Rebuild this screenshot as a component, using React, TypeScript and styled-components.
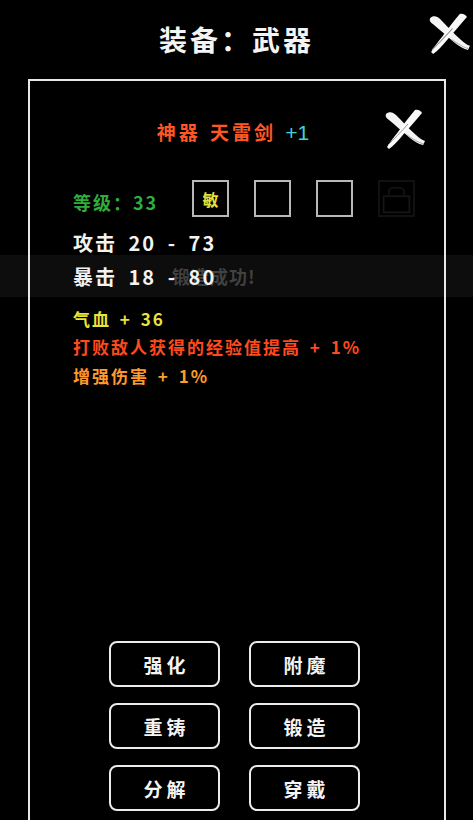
import styled, { createGlobalStyle } from "styled-components";

const GlobalStyle = createGlobalStyle`
  html, body {
    margin: 0;
    padding: 0;
    background: #000;
  }
  body {
    font-family: "Noto Sans CJK SC", "Noto Sans", sans-serif;
    color: #fff;
  }
`;

const Page = styled.div`
  position: relative;
  width: 473px;
  height: 820px;
  overflow: hidden;
  background: #000;
  display: flex;
  flex-direction: column;
`;

const Header = styled.div`
  position: relative;
  height: 79px;
  display: flex;
  align-items: center;
  justify-content: center;
  flex-shrink: 0;
`;

const Title = styled.h1`
  margin: 0;
  padding-bottom: 2px;
  font-size: 28px;
  font-weight: 700;
  letter-spacing: 3px;
  color: #f4f4f4;
`;

const CloseBtn = styled.div<{ $top: number; $right: number; $size: number }>`
  position: absolute;
  top: ${(p) => p.$top}px;
  right: ${(p) => p.$right}px;
  width: ${(p) => p.$size}px;
  height: ${(p) => p.$size}px;
`;

const Panel = styled.div`
  position: relative;
  box-sizing: border-box;
  margin-left: 28px;
  width: 418px;
  flex: 1;
  border: 2px solid #e8e8e8;
  border-bottom: none;
  display: flex;
  flex-direction: column;
  padding: 0 0 9px 43px;
`;

const ItemName = styled.div`
  margin-top: 37px;
  margin-left: -51px;
  text-align: center;
  font-size: 19px;
  font-weight: 700;
  letter-spacing: 3px;
  word-spacing: 2px;
  color: #ff5626;
`;

const Plus = styled.span`
  color: #3fd2dc;
  font-family: "Liberation Sans", sans-serif;
  font-size: 21px;
  font-weight: 400;
  letter-spacing: 0;
`;

const LevelRow = styled.div`
  margin-top: 35px;
  display: flex;
  align-items: center;
`;

const Level = styled.div`
  width: 119px;
  font-size: 18px;
  font-weight: 700;
  color: #31ad3c;
  letter-spacing: 2px;
  padding-top: 6px;
`;

const Slots = styled.div`
  display: flex;
  gap: 25px;
`;

const Slot = styled.div<{ $faint?: boolean }>`
  width: 37px;
  height: 37px;
  box-sizing: border-box;
  border: 2px solid ${(p) => (p.$faint ? "#111" : "#b8b8b8")};
  display: flex;
  align-items: center;
  justify-content: center;
  font-size: 16px;
  font-weight: 700;
  color: #e8e03a;
`;

const StatLine = styled.div<{ $top: number }>`
  margin-top: ${(p) => p.$top}px;
  font-size: 20px;
  line-height: 24px;
  font-weight: 700;
  color: #f2f2f2;
  letter-spacing: 2px;
  word-spacing: 5px;
  position: relative;
  z-index: 2;
`;

const AttrLine = styled.div<{ $color: string; $top: number }>`
  margin-top: ${(p) => p.$top}px;
  font-size: 17px;
  line-height: 20px;
  font-weight: 700;
  color: ${(p) => p.$color};
  letter-spacing: 2px;
  word-spacing: 3px;
`;

const Actions = styled.div`
  margin-top: auto;
  margin-left: 36px;
  display: grid;
  grid-template-columns: 111px 111px;
  column-gap: 29px;
  row-gap: 16px;
`;

const ActionButton = styled.button`
  height: 46px;
  box-sizing: border-box;
  border: 2px solid #ececec;
  border-radius: 8px;
  background: #000;
  color: #f4f4f4;
  font-family: "Noto Sans CJK SC", sans-serif;
  font-size: 19px;
  font-weight: 700;
  letter-spacing: 4px;
  padding: 0 0 0 4px;
`;

const Toast = styled.div`
  position: absolute;
  left: 0;
  right: 0;
  top: 255px;
  height: 42px;
  background: rgba(255, 255, 255, 0.05);
  display: flex;
  align-items: center;
  padding-left: 172px;
  font-size: 18px;
  font-weight: 700;
  color: rgba(255, 255, 255, 0.22);
  letter-spacing: 1px;
  z-index: 1;
`;

// brush-stroke style X used for both close buttons
const BrushX = ({ size }: { size: number }) => (
  <svg width={size} height={size} viewBox="0 0 42 42">
    <path
      d="M3 6 C6 3 10 4 13 7 C19 13 26 21 33 27 C36 30 39 32 42 33 L40 37 C35 36 31 33 27 30 C20 24 12 17 6 12 C3 10 2 8 3 6 Z"
      fill="#f4f4f4"
    />
    <path
      d="M32 2 C35 1 38 3 39 5 C33 12 26 20 19 28 C15 33 10 38 6 41 L4 39 C7 34 11 29 15 24 C20 17 26 9 32 2 Z"
      fill="#fafafa"
    />
    <path d="M5 37 C11 31 18 24 25 16" stroke="#999" strokeWidth="1" fill="none" />
    <path d="M24 27 C30 31 36 35 41 36" stroke="#aaa" strokeWidth="1" fill="none" />
  </svg>
);

const Lock = () => (
  <svg width="37" height="37" viewBox="0 0 37 37">
    <rect x="4" y="16" width="29" height="18" fill="none" stroke="#151515" strokeWidth="2" />
    <path d="M10 16 V10 C10 5 27 5 27 10 V16" fill="none" stroke="#121212" strokeWidth="2" />
  </svg>
);

export default function App() {
  const actions = ["强化", "附魔", "重铸", "锻造", "分解", "穿戴"];
  return (
    <Page>
      <GlobalStyle />
      <Header>
        <Title>装备：武器</Title>
        <CloseBtn $top={12} $right={3} $size={43}>
          <BrushX size={43} />
        </CloseBtn>
      </Header>
      <Panel>
        <CloseBtn $top={27} $right={19} $size={42}>
          <BrushX size={42} />
        </CloseBtn>
        <ItemName>
          神器 天雷剑 <Plus>+1</Plus>
        </ItemName>
        <LevelRow>
          <Level>等级：33</Level>
          <Slots>
            <Slot>敏</Slot>
            <Slot />
            <Slot />
            <Slot $faint>
              <Lock />
            </Slot>
          </Slots>
        </LevelRow>
        <StatLine $top={14}>攻击 20 - 73</StatLine>
        <StatLine $top={10}>暴击 18 - 80</StatLine>
        <AttrLine $color="#e8e43a" $top={20}>气血 + 36</AttrLine>
        <AttrLine $color="#ff4a1c" $top={8}>打败敌人获得的经验值提高 + 1%</AttrLine>
        <AttrLine $color="#ff9a2c" $top={9}>增强伤害 + 1%</AttrLine>
        <Actions>
          {actions.map((a) => (
            <ActionButton key={a}>{a}</ActionButton>
          ))}
        </Actions>
      </Panel>
      <Toast>锻造成功!</Toast>
    </Page>
  );
}
